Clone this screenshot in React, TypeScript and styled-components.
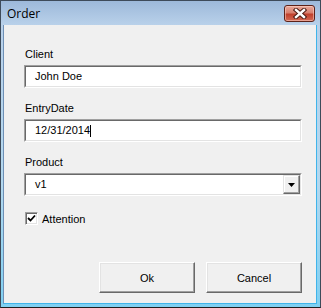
import styled, { createGlobalStyle } from "styled-components";

const GlobalStyle = createGlobalStyle`
  html, body {
    margin: 0;
    padding: 0;
    background: #ffffff;
  }
  * {
    box-sizing: border-box;
  }
`;

const Window = styled.div`
  width: 321px;
  height: 308px;
  border: 1px solid #3e4b5a;
  border-bottom-color: #1e1e1e;
  background: linear-gradient(to bottom, #9db9da 0px, #b9d1ea 24px, #b3d8ef 60%, #7fd0f2 100%);
  display: flex;
  flex-direction: column;
  font-family: "Liberation Sans", Arial, sans-serif;
`;

const TitleBar = styled.div`
  height: 24px;
  flex: none;
  display: flex;
  align-items: flex-start;
  padding: 0 5px 0 6px;
`;

const Title = styled.div`
  font-family: "Open Sans", "Liberation Sans", sans-serif;
  font-size: 12px;
  color: #000;
  line-height: 16px;
  margin-top: 5px;
`;

const CloseButton = styled.div`
  margin-left: auto;
  margin-top: 4px;
  width: 31px;
  height: 17px;
  border: 1px solid #5d2219;
  border-radius: 3px;
  background: linear-gradient(to bottom, #e9a99b 0%, #d8806f 45%, #c0402c 55%, #d46a55 100%);
  box-shadow: inset 0 0 0 1px rgba(255, 220, 210, 0.5);
  display: flex;
  align-items: center;
  justify-content: center;
`;

const Client = styled.div`
  flex: 1;
  margin: 0 3px 3px 2px;
  background: #f0f0f0;
  border-left: 1px solid #6e8fb5;
  border-right: 1px solid #3fb4ea;
  border-bottom: 1px solid #3fb4ea;
  display: flex;
  flex-direction: column;
  padding: 22px 14px 10px 20px;
  font-size: 11px;
  color: #000;
`;

const Label = styled.div`
  line-height: 15px;
  height: 15px;
  margin-bottom: 3px;
  padding-left: 1px;
`;

const Field = styled.div`
  margin-bottom: 13px;
`;

const Sunken = styled.div`
  height: 23px;
  background: #fff;
  border-top: 1px solid #a0a0a0;
  border-left: 1px solid #a0a0a0;
  border-right: 1px solid #ffffff;
  border-bottom: 1px solid #ffffff;
  position: relative;
`;

const SunkenInner = styled.div`
  height: 100%;
  border-top: 1px solid #696969;
  border-left: 1px solid #696969;
  border-right: 1px solid #e3e3e3;
  border-bottom: 1px solid #e3e3e3;
  display: flex;
  align-items: center;
  padding-left: 9px;
`;

const Value = styled.span`
  line-height: 13px;
`;

const Caret = styled.span`
  display: inline-block;
  width: 1px;
  height: 12px;
  background: #000;
  margin-left: 0px;
`;

const DropButton = styled.div`
  margin-left: auto;
  width: 17px;
  height: 100%;
  background: #f0f0f0;
  border-top: 1px solid #e3e3e3;
  border-left: 1px solid #e3e3e3;
  border-right: 1px solid #696969;
  border-bottom: 1px solid #696969;
  box-shadow: inset -1px -1px 0 #a0a0a0, inset 1px 1px 0 #ffffff;
  display: flex;
  align-items: center;
  justify-content: center;
`;

const CheckRow = styled.div`
  display: flex;
  align-items: center;
  margin-top: 3px;
  padding-left: 1px;
`;

const CheckBox = styled.div`
  width: 13px;
  height: 13px;
  background: #fff;
  border-top: 1px solid #a0a0a0;
  border-left: 1px solid #a0a0a0;
  border-right: 1px solid #fff;
  border-bottom: 1px solid #fff;
  box-shadow: inset 1px 1px 0 #696969, inset -1px -1px 0 #e3e3e3;
  display: flex;
  align-items: center;
  justify-content: center;
  margin-right: 4px;
`;

const Buttons = styled.div`
  margin-top: auto;
  display: flex;
  justify-content: flex-end;
  gap: 11px;
`;

const Button = styled.div`
  width: 96px;
  height: 31px;
  background: #f0f0f0;
  border-top: 1px solid #ffffff;
  border-left: 1px solid #ffffff;
  border-right: 1px solid #696969;
  border-bottom: 1px solid #696969;
  box-shadow: inset -1px -1px 0 #a0a0a0, inset 1px 1px 0 #e3e3e3;
  display: flex;
  align-items: center;
  justify-content: center;
  padding-top: 1px;
`;

const CloseGlyph = () => (
  <svg width="14" height="11" viewBox="0 0 14 11">
    <path d="M3 2 L11 9 M11 2 L3 9" stroke="#4a1a12" strokeWidth="4.4" strokeLinecap="square" />
    <path d="M3 2 L11 9 M11 2 L3 9" stroke="#ffffff" strokeWidth="2.4" strokeLinecap="square" />
  </svg>
);

const TextBox = ({ value, caret }: { value: string; caret?: boolean }) => (
  <Sunken>
    <SunkenInner>
      <Value>{value}</Value>
      {caret && <Caret />}
    </SunkenInner>
  </Sunken>
);

export default function App() {
  return (
    <>
      <GlobalStyle />
      <Window>
        <TitleBar>
          <Title>Order</Title>
          <CloseButton>
            <CloseGlyph />
          </CloseButton>
        </TitleBar>
        <Client>
          <Field>
            <Label>Client</Label>
            <TextBox value="John Doe" />
          </Field>
          <Field>
            <Label>EntryDate</Label>
            <TextBox value="12/31/2014" caret />
          </Field>
          <Field>
            <Label>Product</Label>
            <Sunken>
              <SunkenInner style={{ paddingRight: 0 }}>
                <Value>v1</Value>
                <DropButton>
                  <svg width="7" height="4" viewBox="0 0 7 4">
                    <path d="M0 0 H7 L3.5 4 Z" fill="#000" />
                  </svg>
                </DropButton>
              </SunkenInner>
            </Sunken>
          </Field>
          <CheckRow>
            <CheckBox>
              <svg width="9" height="9" viewBox="0 0 9 9">
                <path d="M1 4 L3.5 6.5 L8 1.5" stroke="#000" strokeWidth="1.8" fill="none" />
              </svg>
            </CheckBox>
            <span>Attention</span>
          </CheckRow>
          <Buttons>
            <Button>Ok</Button>
            <Button>Cancel</Button>
          </Buttons>
        </Client>
      </Window>
    </>
  );
}
